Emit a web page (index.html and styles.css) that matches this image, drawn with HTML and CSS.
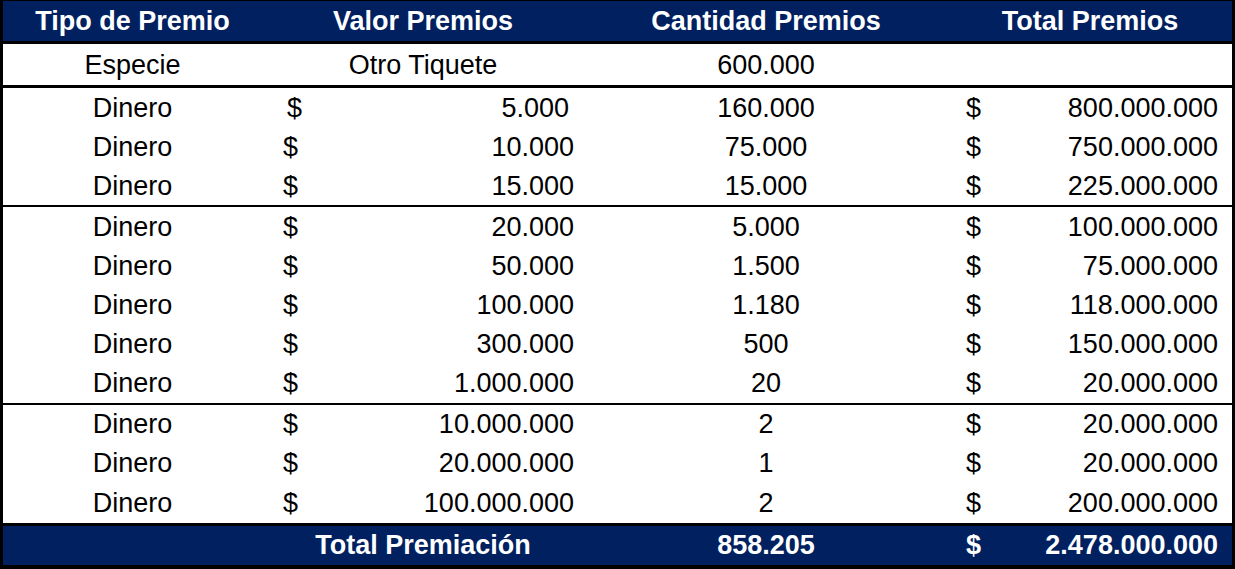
FILE: index.html
```html
<!DOCTYPE html>
<html lang="es">
<head>
<meta charset="utf-8">
<title>Premios</title>
<link rel="stylesheet" href="styles.css">
</head>
<body>
<div class="sheet">
  <div class="row head">
    <div class="cell c">Tipo de Premio</div>
    <div class="cell c">Valor Premios</div>
    <div class="cell c">Cantidad Premios</div>
    <div class="cell c">Total Premios</div>
  </div>
  <div class="row tall sep3">
    <div class="cell c">Especie</div>
    <div class="cell c">Otro Tiquete</div>
    <div class="cell c">600.000</div>
    <div class="cell"></div>
  </div>
  <div class="group sep3">
    <div class="row">
      <div class="cell c">Dinero</div>
      <div class="cell money v first"><span>$</span><span>5.000</span></div>
      <div class="cell c">160.000</div>
      <div class="cell money t"><span>$</span><span>800.000.000</span></div>
    </div>
    <div class="row">
      <div class="cell c">Dinero</div>
      <div class="cell money v"><span>$</span><span>10.000</span></div>
      <div class="cell c">75.000</div>
      <div class="cell money t"><span>$</span><span>750.000.000</span></div>
    </div>
    <div class="row">
      <div class="cell c">Dinero</div>
      <div class="cell money v"><span>$</span><span>15.000</span></div>
      <div class="cell c">15.000</div>
      <div class="cell money t"><span>$</span><span>225.000.000</span></div>
    </div>
  </div>
  <div class="group sep2">
    <div class="row">
      <div class="cell c">Dinero</div>
      <div class="cell money v"><span>$</span><span>20.000</span></div>
      <div class="cell c">5.000</div>
      <div class="cell money t"><span>$</span><span>100.000.000</span></div>
    </div>
    <div class="row">
      <div class="cell c">Dinero</div>
      <div class="cell money v"><span>$</span><span>50.000</span></div>
      <div class="cell c">1.500</div>
      <div class="cell money t"><span>$</span><span>75.000.000</span></div>
    </div>
    <div class="row">
      <div class="cell c">Dinero</div>
      <div class="cell money v"><span>$</span><span>100.000</span></div>
      <div class="cell c">1.180</div>
      <div class="cell money t"><span>$</span><span>118.000.000</span></div>
    </div>
    <div class="row">
      <div class="cell c">Dinero</div>
      <div class="cell money v"><span>$</span><span>300.000</span></div>
      <div class="cell c">500</div>
      <div class="cell money t"><span>$</span><span>150.000.000</span></div>
    </div>
    <div class="row">
      <div class="cell c">Dinero</div>
      <div class="cell money v"><span>$</span><span>1.000.000</span></div>
      <div class="cell c">20</div>
      <div class="cell money t"><span>$</span><span>20.000.000</span></div>
    </div>
  </div>
  <div class="group sep2">
    <div class="row">
      <div class="cell c">Dinero</div>
      <div class="cell money v"><span>$</span><span>10.000.000</span></div>
      <div class="cell c">2</div>
      <div class="cell money t"><span>$</span><span>20.000.000</span></div>
    </div>
    <div class="row">
      <div class="cell c">Dinero</div>
      <div class="cell money v"><span>$</span><span>20.000.000</span></div>
      <div class="cell c">1</div>
      <div class="cell money t"><span>$</span><span>20.000.000</span></div>
    </div>
    <div class="row last">
      <div class="cell c">Dinero</div>
      <div class="cell money v"><span>$</span><span>100.000.000</span></div>
      <div class="cell c">2</div>
      <div class="cell money t"><span>$</span><span>200.000.000</span></div>
    </div>
  </div>
  <div class="row foot sep3">
    <div class="cell"></div>
    <div class="cell c">Total Premiación</div>
    <div class="cell c">858.205</div>
    <div class="cell money t"><span>$</span><span>2.478.000.000</span></div>
  </div>
</div>
</body>
</html>
```

FILE: styles.css
```css
html, body {
  margin: 0;
  padding: 0;
  background: #ffffff;
}

.sheet {
  width: 1229px;
  border-style: solid;
  border-color: #000000;
  border-width: 1px 3px 4px 3px;
  font-family: "Liberation Sans", Arial, sans-serif;
  font-size: 27px;
  color: #000000;
  background: #ffffff;
}

.row {
  display: grid;
  grid-template-columns: 259px 322px 364px 284px;
  height: 39px;
  align-items: center;
}

.group > .row:nth-child(even) {
  height: 39.2px;
}

.row.last {
  height: 40px;
}

.row.head {
  height: 40px;
  background: #002060;
  color: #ffffff;
  font-weight: bold;
}

.row.tall {
  height: 41px;
}

.row.foot {
  height: 39px;
  background: #002060;
  color: #ffffff;
  font-weight: bold;
}

.sep3 {
  border-top: 3px solid #000000;
}

.sep2 {
  border-top: 2px solid #000000;
}

.cell {
  line-height: 30px;
  white-space: nowrap;
}

.cell.c {
  text-align: center;
}

.cell.money {
  display: flex;
  justify-content: space-between;
}

.cell.money.v {
  padding: 0 10px 0 21px;
}

.cell.money.v.first {
  padding: 0 15px 0 25px;
}

.cell.money.t {
  padding: 0 14px 0 18px;
}
```
